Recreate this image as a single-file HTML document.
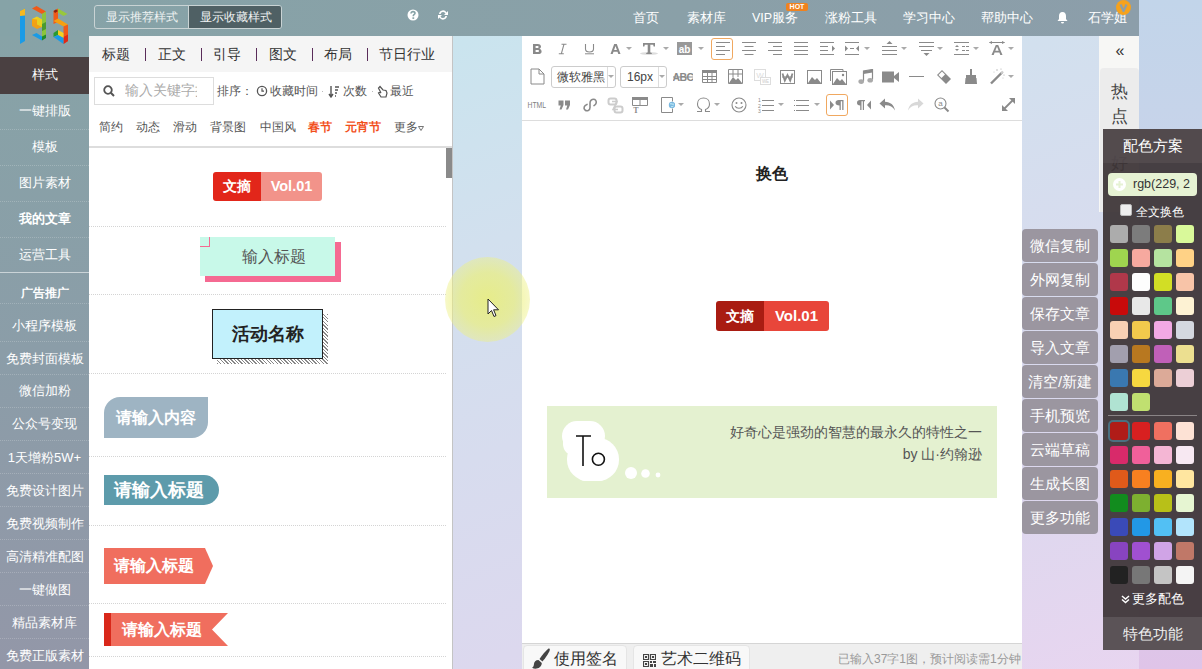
<!DOCTYPE html>
<html><head><meta charset="utf-8">
<style>
*{box-sizing:border-box;margin:0;padding:0}
html,body{width:1202px;height:669px;overflow:hidden}
body{position:relative;font-family:"Liberation Sans",sans-serif;background:linear-gradient(160deg,#c2e8ee 0%,#d2e0ee 38%,#dcd8ee 76%,#e9d5f0 100%);color:#333}
.abs{position:absolute}
#topbar{left:0;top:0;width:1139px;height:36px;background:linear-gradient(90deg,#86a3a7 0%,#8aa0a8 60%,#8c9eaa 100%)}
#side{left:0;top:36px;width:89px;height:633px;background:linear-gradient(180deg,#87a3a7 0%,#8b9da8 50%,#9397a8 100%)}
#panel{left:89px;top:36px;width:364px;height:633px;background:#fff;overflow:hidden}
#editor{left:522px;top:36px;width:500px;height:633px;background:#fff}
#cpanel{left:1103px;top:128px;width:99px;height:541px;background:#4b4446}
.btngrp{left:94px;top:5px;width:188px;height:24px;border:1px solid #c9d3d4;border-radius:3px;overflow:hidden;font-size:12px;color:#eef2f2}
.btngrp div{position:absolute;top:0;height:22px;line-height:22px;text-align:center}
.nav{top:0;height:36px;line-height:36px;font-size:12.5px;color:#fff;white-space:nowrap}
.si{position:absolute;left:0;width:89px;text-align:center;font-size:13px;color:#fff;white-space:nowrap}
.sep{position:absolute;left:0;width:89px;height:1px;background:repeating-linear-gradient(90deg,rgba(255,255,255,.2) 0 1px,transparent 1px 2px)}
.tabs span{display:inline-block}
.tabs .bar{color:#5a2d5a;margin:0 13px;font-size:13px}
.cats span{position:absolute;top:0}
.dot{position:absolute;left:0;width:357px;height:1px;background:repeating-linear-gradient(90deg,#d4d4d4 0 1px,transparent 1px 2px)}
.rb{left:1022px;width:76px;height:33px;line-height:33px;background:#9b96a0;border-radius:4px;color:#fff;font-size:15px;text-align:center;white-space:nowrap}
.sw{position:absolute;width:18px;height:18px;border-radius:3px}
.sel{border:1px solid #ccc;border-radius:3px;background:#fff;font-size:12px;color:#444}
.sel span{position:absolute;top:0;line-height:20px;white-space:nowrap}
.sel i{position:absolute;top:0;width:1px;height:20px;background:#ddd}
</style></head><body>
<div id="topbar" class="abs"></div>
<div id="side" class="abs"></div>
<!-- logo -->
<svg class="abs" style="left:14px;top:2px" width="60" height="46" viewBox="14 2 60 46">
 <polygon points="20,11 25,8.5 25,41 20,44" fill="#1a9be6"/>
 <polygon points="20,11 25,8.5 25,15.5 20,16" fill="#f5b820"/>
 <polygon points="32,8.5 36.5,6 46,11.5 42,14" fill="#f05a18"/>
 <polygon points="42,14 46,11.5 46,37 42,39.5" fill="#8cc43c"/>
 <polygon points="32,19 37,16.5 42,19.5 42,24 37,21.5 32,24" fill="#f0d020"/>
 <polygon points="32,19 32,26 37,29 42,27 42,20" fill="#f5a010" opacity="0.95"/>
 <polygon points="37,17 42,19.5 42,27 37,24.5" fill="#e8d020"/>
 <polygon points="42,24 46,22 46,29 42,31" fill="#4a9a30"/>
 <polygon points="32,35 36.5,33 42,36.5 42,40.5" fill="#1a9be6"/>
 <polygon points="42,36.5 46,34.5 46,38 42,40.5" fill="#1f8a2a"/>
 <polygon points="53.5,11 58,8.5 58,22 53.5,24" fill="#f05a18"/>
 <polygon points="53.5,11 56,9.5 58,11 55,13" fill="#8a2010"/>
 <polygon points="58,8.5 67.5,14 63.5,16 58,12.5" fill="#98c83c"/>
 <polygon points="53.5,21 58,18.5 68,24.5 63.5,26.5" fill="#f5a010"/>
 <polygon points="63.5,26.5 68,24.5 68,41 63.5,44" fill="#f05a18"/>
 <polygon points="63.5,37 68,34.5 68,41 63.5,44" fill="#e02818"/>
 <polygon points="58,30 63.5,33 63.5,38 58,35" fill="#f5d020"/>
 <polygon points="53.5,33 58,30 58,35 53.5,37" fill="#2a9a30"/>
 <polygon points="53.5,37 58,35 63.5,38 63.5,44" fill="#1a9be6"/>
</svg>
<div class="abs btngrp">
 <div style="left:0;width:93px">显示推荐样式</div>
 <div style="left:93px;width:94px;background:#4f6064;border-left:1px solid #c9d3d4">显示收藏样式</div>
</div>
<!-- help/refresh icons -->
<svg class="abs" style="left:407px;top:9px" width="12" height="12" viewBox="0 0 12 12"><circle cx="6" cy="6" r="5.5" fill="#fff"/><path d="M4 4.6 C4 3.2 5 2.6 6 2.6 C7.2 2.6 8 3.3 8 4.3 C8 5.3 7 5.6 6.6 6 C6.3 6.3 6.3 6.8 6.3 7.3" fill="none" stroke="#87a3a7" stroke-width="1.6"/><rect x="5.4" y="8.3" width="1.8" height="1.6" fill="#87a3a7"/></svg>
<svg class="abs" style="left:437px;top:9px" width="12" height="12" viewBox="0 0 12 12"><path d="M2 5 A4 4 0 0 1 9.5 3.5 L11 2 L11 6 L7 6 L8.5 4.5 A2.6 2.6 0 0 0 3.6 5 Z M10 7 A4 4 0 0 1 2.5 8.5 L1 10 L1 6 L5 6 L3.5 7.5 A2.6 2.6 0 0 0 8.4 7 Z" fill="#fff"/></svg>
<div class="abs nav" style="left:633px">首页</div>
<div class="abs nav" style="left:687px">素材库</div>
<div class="abs nav" style="left:752px">VIP服务</div>
<div class="abs" style="left:786px;top:3px;width:22px;height:8px;background:#f0821e;border-radius:2px;font-size:7px;line-height:8px;color:#fff;font-weight:bold;text-align:center">HOT</div>
<div class="abs nav" style="left:825px">涨粉工具</div>
<div class="abs nav" style="left:903px">学习中心</div>
<div class="abs nav" style="left:981px">帮助中心</div>
<svg class="abs" style="left:1056px;top:11px" width="13" height="13" viewBox="0 0 13 13"><path d="M6.5 1 C4 1 3 3 3 5 L3 8 L1.5 10 L11.5 10 L10 8 L10 5 C10 3 9 1 6.5 1 Z M5 11 A1.5 1.5 0 0 0 8 11 Z" fill="#fff"/></svg>
<div class="abs nav" style="left:1088px">石学姐</div>
<svg class="abs" style="left:1116px;top:0px" width="15" height="15" viewBox="0 0 15 15"><circle cx="7.5" cy="7.5" r="7.5" fill="#f6a21c"/><path d="M4.5 4.5 L7.5 11 L10.5 4.5" fill="none" stroke="#8e9ea6" stroke-width="2.2" stroke-linejoin="round"/></svg>

<!-- sidebar items -->
<div class="abs" style="left:0;top:57px;width:89px;height:37px;background:#4a4041"></div>
<div class="si" style="top:57px;line-height:36px">样式</div>
<div class="si" style="top:93px;line-height:36px">一键排版</div>
<div class="sep" style="top:129px"></div>
<div class="si" style="top:129px;line-height:36px">模板</div>
<div class="sep" style="top:165px"></div>
<div class="si" style="top:165px;line-height:36px">图片素材</div>
<div class="sep" style="top:201px"></div>
<div class="si" style="top:201px;line-height:36px;font-weight:bold">我的文章</div>
<div class="sep" style="top:237px"></div>
<div class="si" style="top:237px;line-height:36px">运营工具</div>
<div class="abs" style="left:0;top:272px;width:89px;height:1px;background:rgba(255,255,255,.55)"></div>
<div class="si" style="top:277px;line-height:33px;font-weight:bold;font-size:11.5px">广告推广</div>
<div class="sep" style="top:303px"></div>
<div class="si" style="top:309px;line-height:33px">小程序模板</div>
<div class="sep" style="top:341px"></div>
<div class="si" style="top:342px;line-height:33px">免费封面模板</div>
<div class="sep" style="top:374px"></div>
<div class="si" style="top:374px;line-height:33px">微信加粉</div>
<div class="sep" style="top:407px"></div>
<div class="si" style="top:407px;line-height:33px">公众号变现</div>
<div class="sep" style="top:440px"></div>
<div class="si" style="top:441px;line-height:33px">1天增粉5W+</div>
<div class="sep" style="top:473px"></div>
<div class="si" style="top:474px;line-height:33px">免费设计图片</div>
<div class="sep" style="top:506px"></div>
<div class="si" style="top:507px;line-height:33px">免费视频制作</div>
<div class="sep" style="top:539px"></div>
<div class="si" style="top:540px;line-height:33px">高清精准配图</div>
<div class="sep" style="top:572px"></div>
<div class="si" style="top:573px;line-height:33px">一键做图</div>
<div class="sep" style="top:605px"></div>
<div class="si" style="top:606px;line-height:33px">精品素材库</div>
<div class="sep" style="top:638px"></div>
<div class="si" style="top:639px;line-height:33px">免费正版素材</div>

<div id="panel" class="abs">
 <div class="abs" style="left:0;top:0;width:363px;height:36px;background:#f5f5f5"></div>
  <div class="abs" style="left:13px;top:0;height:36px;line-height:36px;font-size:14px;color:#333;white-space:nowrap">标题</div>
 <div class="abs" style="left:69px;top:0;height:36px;line-height:36px;font-size:14px;color:#333;white-space:nowrap">正文</div>
 <div class="abs" style="left:124px;top:0;height:36px;line-height:36px;font-size:14px;color:#333;white-space:nowrap">引导</div>
 <div class="abs" style="left:180px;top:0;height:36px;line-height:36px;font-size:14px;color:#333;white-space:nowrap">图文</div>
 <div class="abs" style="left:235px;top:0;height:36px;line-height:36px;font-size:14px;color:#333;white-space:nowrap">布局</div>
 <div class="abs" style="left:290px;top:0;height:36px;line-height:36px;font-size:14px;color:#333;white-space:nowrap">节日行业</div>
 <div class="abs" style="left:55.5px;top:12px;width:1px;height:13px;background:#5a2d5a"></div>
 <div class="abs" style="left:112px;top:12px;width:1px;height:13px;background:#5a2d5a"></div>
 <div class="abs" style="left:167px;top:12px;width:1px;height:13px;background:#5a2d5a"></div>
 <div class="abs" style="left:223px;top:12px;width:1px;height:13px;background:#5a2d5a"></div>
 <div class="abs" style="left:277.5px;top:12px;width:1px;height:13px;background:#5a2d5a"></div>

 <div class="abs" style="left:5px;top:41px;width:120px;height:28px;border:1px solid #ddd;background:#fff"></div>
 <svg class="abs" style="left:14px;top:49px" width="12" height="12" viewBox="0 0 12 12"><circle cx="5" cy="5" r="3.8" fill="none" stroke="#555" stroke-width="1.8"/><line x1="7.8" y1="7.8" x2="11" y2="11" stroke="#555" stroke-width="2"/></svg>
 <div class="abs" style="left:36px;top:41px;width:72px;height:28px;line-height:28px;font-size:13.5px;color:#aaa;white-space:nowrap;overflow:hidden">输入关键字搜索</div>
 <div class="abs" style="left:128px;top:46px;height:18px;line-height:18px;font-size:12px;color:#555;white-space:nowrap">排序：</div>
 <svg class="abs" style="left:167px;top:49px" width="12" height="12" viewBox="0 0 12 12"><circle cx="6" cy="6" r="4.6" fill="none" stroke="#555" stroke-width="1.3"/><path d="M6 3.2 V6.2 H8" fill="none" stroke="#555" stroke-width="1.2"/></svg>
 <div class="abs" style="left:181px;top:46px;height:18px;line-height:18px;font-size:12px;color:#555;white-space:nowrap">收藏时间</div>
 <div class="abs" style="left:233px;top:55px;width:1px;height:1px;background:#bbb"></div>
 <svg class="abs" style="left:239px;top:49px" width="12" height="13" viewBox="0 0 12 13"><path d="M3 1 V11 M1 9 L3 12 L5 9" fill="none" stroke="#555" stroke-width="1.4"/><path d="M7 2 H11 M7 5 H10 M7 8 H9 M7 11 H8" stroke="#555" stroke-width="1.3"/></svg>
 <div class="abs" style="left:254px;top:46px;height:18px;line-height:18px;font-size:12px;color:#555;white-space:nowrap">次数</div>
 <div class="abs" style="left:283px;top:55px;width:1px;height:1px;background:#bbb"></div>
 <svg class="abs" style="left:288px;top:49px" width="11" height="13" viewBox="0 0 11 13"><path d="M3 1.5 L6 5 L9 5.5 L10 8 L9 12 L4 12 L1.5 8 L3 7 L4 8 L1.5 3 Z" fill="none" stroke="#555" stroke-width="1.2"/></svg>
 <div class="abs" style="left:301px;top:46px;height:18px;line-height:18px;font-size:12px;color:#555;white-space:nowrap">最近</div>
 <div class="abs cats" style="left:10px;top:82px;height:18px;line-height:18px;font-size:12px;color:#555;white-space:nowrap">
  <span style="left:0">简约</span><span style="left:37px">动态</span><span style="left:74px">滑动</span><span style="left:111px">背景图</span><span style="left:161px">中国风</span><span style="left:209px;color:#f2501c;font-weight:bold">春节</span><span style="left:246px;color:#f2501c;font-weight:bold">元宵节</span><span style="left:295px">更多<svg width="6" height="5" viewBox="0 0 6 5" style="vertical-align:0px;margin-left:0px"><polygon points="0.5,0.5 5.5,0.5 3,4.5" fill="none" stroke="#666" stroke-width="0.9"/></svg></span>
 </div>>
 <div class="abs" style="left:0;top:110px;width:363px;height:2px;background:#ddd"></div>
 <div class="abs" style="left:357px;top:112px;width:6px;height:30px;background:#8a8a8a"></div>
 <div class="abs" style="left:363px;top:0;width:1px;height:633px;background:#c4c4c4"></div>
 <div class="dot" style="top:190px"></div>
 <div class="dot" style="top:258px"></div>
 <div class="dot" style="top:337px"></div>
 <div class="dot" style="top:420px"></div>
 <div class="dot" style="top:489px"></div>
 <div class="dot" style="top:567px"></div>
 <div class="dot" style="top:620px"></div>
 <!-- item1 -->
 <div class="abs" style="left:124px;top:136px;width:109px;height:29px;border-radius:3px;overflow:hidden;font-weight:bold;color:#fff;white-space:nowrap">
  <div class="abs" style="left:0;top:0;width:48px;height:29px;background:#e2261a;line-height:29px;text-align:center;font-size:14px">文摘</div>
  <div class="abs" style="left:48px;top:0;width:61px;height:29px;background:#f2938a;line-height:29px;text-align:center;font-size:14.5px">Vol.01</div>
 </div>
 <!-- item2 -->
 <div class="abs" style="left:116px;top:206px;width:136px;height:40px;background:#f56a92"></div>
 <div class="abs" style="left:111px;top:201px;width:135px;height:39px;background:#c8f9e9;line-height:39px;text-align:center;padding-left:12px;font-size:16px;color:#555">输入标题</div>
 <div class="abs" style="left:111px;top:201px;width:10px;height:10px;border-right:1px solid #f56a92;border-bottom:1px solid #f56a92"></div>
 <!-- item3 -->
 <div class="abs" style="left:128px;top:278px;width:111px;height:50px;background:repeating-linear-gradient(45deg,#888 0 1px,#fff 1px 2.5px)"></div>
 <div class="abs" style="left:123px;top:273px;width:111px;height:50px;background:#c2f1fc;border:1px solid #222;line-height:48px;text-align:center;font-size:18px;font-weight:bold;color:#222">活动名称</div>
 <!-- item4 -->
 <div class="abs" style="left:15px;top:361px;width:104px;height:41px;background:#9eb4c3;border-radius:16px 0 16px 0;line-height:41px;text-align:center;font-size:16px;font-weight:bold;color:#fff;white-space:nowrap">请输入内容</div>
 <!-- item5 -->
 <div class="abs" style="left:15px;top:439px;width:115px;height:30px;background:#5d9bab;border-radius:0 15px 15px 0;line-height:30px;padding-left:10px;font-size:18px;font-weight:bold;color:#fff;white-space:nowrap">请输入标题</div>
 <!-- item6 -->
 <svg class="abs" style="left:15px;top:512px" width="110" height="36" viewBox="0 0 110 36"><polygon points="0,0 101,0 109,18 101,36 0,36" fill="#f06e5e"/></svg>
 <div class="abs" style="left:25px;top:512px;height:36px;line-height:36px;font-size:16px;font-weight:bold;color:#fff;white-space:nowrap">请输入标题</div>
 <!-- item7 -->
 <svg class="abs" style="left:15px;top:577px" width="125" height="33" viewBox="0 0 125 33"><polygon points="0,0 124,0 108,16.5 124,33 0,33" fill="#f06e5e"/><rect x="0" y="0" width="7" height="33" fill="#d9281a"/></svg>
 <div class="abs" style="left:33px;top:577px;height:33px;line-height:33px;font-size:16px;font-weight:bold;color:#fff;white-space:nowrap">请输入标题</div>
</div>
<div id="editor" class="abs"></div>
<div class="abs" style="left:522px;top:120px;width:500px;height:1px;background:#ddd"></div>
<svg class="abs" style="left:532px;top:43px" width="10" height="12" viewBox="0 0 10 12"><path d="M1 1 H5.5 C8 1 9 2.3 9 3.6 C9 4.8 8.2 5.5 7.3 5.8 C8.6 6.1 9.6 7 9.6 8.4 C9.6 10.2 8.2 11 6 11 H1 Z M3.6 3 V5 H5.4 C6.2 5 6.6 4.6 6.6 4 C6.6 3.4 6.2 3 5.4 3 Z M3.6 6.9 V9 H5.6 C6.5 9 7 8.6 7 7.95 C7 7.3 6.5 6.9 5.6 6.9 Z" fill="#8a8a8a"/></svg>
<svg class="abs" style="left:558px;top:43px" width="9" height="12" viewBox="0 0 9 12"><path d="M3.5 1.2 H8.5 M0.8 10.8 H5.8 M6 1.2 L3.3 10.8" stroke="#8a8a8a" stroke-width="1.1" fill="none"/></svg>
<svg class="abs" style="left:584px;top:43px" width="11" height="12" viewBox="0 0 11 12"><path d="M1.5 1 V6 C1.5 8.2 3 9 5.5 9 C8 9 9.5 8.2 9.5 6 V1" stroke="#8a8a8a" stroke-width="1.1" fill="none"/><rect x="1" y="10.3" width="9" height="1" fill="#8a8a8a"/></svg>
<svg class="abs" style="left:610px;top:43px" width="11" height="12" viewBox="0 0 11 12"><path d="M0.5 11 L4.2 1 H6.8 L10.5 11 H8.3 L7.5 8.8 H3.5 L2.7 11 Z M4.1 7 H6.9 L5.5 3 Z" fill="#8a8a8a"/></svg>
<svg class="abs" style="left:626px;top:47px" width="6" height="4" viewBox="0 0 6 4"><polygon points="0,0 6,0 3,3" fill="#aaa"/></svg>
<svg class="abs" style="left:640px;top:42px" width="19" height="14" viewBox="0 0 19 14"><ellipse cx="9" cy="11.5" rx="9" ry="1.5" fill="#ddd"/><path d="M3 1 H15 V4.5 H13.6 L13.2 2.8 H10.3 V10.5 L11.8 11 V12 H6.2 V11 L7.7 10.5 V2.8 H4.8 L4.4 4.5 H3 Z" fill="#8a8a8a"/></svg>
<svg class="abs" style="left:663px;top:47px" width="6" height="4" viewBox="0 0 6 4"><polygon points="0,0 6,0 3,3" fill="#aaa"/></svg>
<svg class="abs" style="left:677px;top:42px" width="15" height="13" viewBox="0 0 15 13"><rect x="0" y="0" width="15" height="13" fill="#999"/><text x="7.5" y="10.5" font-family="Liberation Sans" font-weight="bold" font-size="10" fill="#fff" text-anchor="middle">ab</text></svg>
<svg class="abs" style="left:698px;top:47px" width="6" height="4" viewBox="0 0 6 4"><polygon points="0,0 6,0 3,3" fill="#aaa"/></svg>
<div class="abs" style="left:711px;top:38px;width:22px;height:22px;border:1px solid #f0a860;border-radius:3px"></div>
<svg class="abs" style="left:716px;top:42px" width="15" height="14" viewBox="0 0 15 14"><rect x="0" y="0" width="14" height="1" fill="#8a8a8a"/><rect x="0" y="4" width="9" height="1" fill="#8a8a8a"/><rect x="0" y="8" width="14" height="1" fill="#8a8a8a"/><rect x="0" y="12" width="9" height="1" fill="#8a8a8a"/></svg>
<svg class="abs" style="left:742px;top:42px" width="15" height="14" viewBox="0 0 15 14"><rect x="0" y="0" width="14" height="1" fill="#8a8a8a"/><rect x="2.5" y="4" width="9" height="1" fill="#8a8a8a"/><rect x="0" y="8" width="14" height="1" fill="#8a8a8a"/><rect x="2.5" y="12" width="9" height="1" fill="#8a8a8a"/></svg>
<svg class="abs" style="left:768px;top:42px" width="15" height="14" viewBox="0 0 15 14"><rect x="0" y="0" width="14" height="1" fill="#8a8a8a"/><rect x="5" y="4" width="9" height="1" fill="#8a8a8a"/><rect x="0" y="8" width="14" height="1" fill="#8a8a8a"/><rect x="5" y="12" width="9" height="1" fill="#8a8a8a"/></svg>
<svg class="abs" style="left:794px;top:42px" width="15" height="14" viewBox="0 0 15 14"><rect x="0" y="0" width="14" height="1" fill="#8a8a8a"/><rect x="0" y="4" width="14" height="1" fill="#8a8a8a"/><rect x="0" y="8" width="14" height="1" fill="#8a8a8a"/><rect x="0" y="12" width="14" height="1" fill="#8a8a8a"/></svg>
<svg class="abs" style="left:820px;top:42px" width="16" height="14" viewBox="0 0 16 14"><rect x="0" y="0" width="14" height="1" fill="#8a8a8a"/><rect x="0" y="4" width="8" height="1" fill="#8a8a8a"/><rect x="0" y="8" width="8" height="1" fill="#8a8a8a"/><rect x="0" y="12" width="14" height="1" fill="#8a8a8a"/><polygon points="12,3.5 15,6.5 12,9.5" fill="#8a8a8a"/></svg>
<svg class="abs" style="left:845px;top:42px" width="15" height="14" viewBox="0 0 15 14"><rect x="0" y="0" width="14" height="1" fill="#8a8a8a"/><rect x="5" y="6" width="4" height="1" fill="#8a8a8a"/><rect x="0" y="12" width="14" height="1" fill="#8a8a8a"/><polygon points="0,3.5 3,6.5 0,9.5" fill="#8a8a8a"/><polygon points="14,3.5 11,6.5 14,9.5" fill="#8a8a8a"/></svg>
<svg class="abs" style="left:864px;top:47px" width="6" height="4" viewBox="0 0 6 4"><polygon points="0,0 6,0 3,3" fill="#aaa"/></svg>
<svg class="abs" style="left:882px;top:40px" width="15" height="16" viewBox="0 0 15 16"><polygon points="4.5,4 7.5,1 10.5,4" fill="#8a8a8a"/><rect x="0" y="6" width="15" height="1" fill="#8a8a8a"/><rect x="0" y="10" width="15" height="1" fill="#8a8a8a"/><rect x="0" y="14" width="15" height="1" fill="#8a8a8a"/></svg>
<svg class="abs" style="left:901px;top:47px" width="6" height="4" viewBox="0 0 6 4"><polygon points="0,0 6,0 3,3" fill="#aaa"/></svg>
<svg class="abs" style="left:919px;top:41px" width="15" height="16" viewBox="0 0 15 16"><rect x="0" y="1" width="15" height="1" fill="#8a8a8a"/><rect x="0" y="5" width="15" height="1" fill="#8a8a8a"/><rect x="2" y="9" width="11" height="1" fill="#8a8a8a"/><polygon points="4.5,12 10.5,12 7.5,15" fill="#8a8a8a"/></svg>
<svg class="abs" style="left:937px;top:47px" width="6" height="4" viewBox="0 0 6 4"><polygon points="0,0 6,0 3,3" fill="#aaa"/></svg>
<svg class="abs" style="left:954px;top:41px" width="15" height="15" viewBox="0 0 15 15"><rect x="0" y="1" width="15" height="1" fill="#8a8a8a"/><rect x="0" y="13" width="15" height="1" fill="#8a8a8a"/><polygon points="1,6 3,4 5,6" fill="#8a8a8a"/><polygon points="1,8 3,10 5,8" fill="#8a8a8a"/><rect x="8" y="5" width="3" height="1" fill="#8a8a8a"/><rect x="12" y="5" width="3" height="1" fill="#8a8a8a"/><rect x="8" y="9" width="3" height="1" fill="#8a8a8a"/><rect x="12" y="9" width="3" height="1" fill="#8a8a8a"/></svg>
<svg class="abs" style="left:973px;top:47px" width="6" height="4" viewBox="0 0 6 4"><polygon points="0,0 6,0 3,3" fill="#aaa"/></svg>
<svg class="abs" style="left:989px;top:41px" width="16" height="15" viewBox="0 0 16 15"><rect x="0.5" y="1" width="15" height="1" fill="#8a8a8a"/><polygon points="0,1.5 3,0 3,3" fill="#8a8a8a"/><polygon points="16,1.5 13,0 13,3" fill="#8a8a8a"/><path d="M2.5 14 L6.8 4 H9.2 L13.5 14 H11.3 L10.4 11.6 H5.6 L4.7 14 Z M6.3 9.8 H9.7 L8 5.6 Z" fill="#8a8a8a"/></svg>
<svg class="abs" style="left:1008px;top:47px" width="6" height="4" viewBox="0 0 6 4"><polygon points="0,0 6,0 3,3" fill="#aaa"/></svg>
<svg class="abs" style="left:530px;top:68px" width="15" height="17" viewBox="0 0 15 17"><path d="M1 1 H9 L14 6 V16 H1 Z M9 1 V6 H14" fill="none" stroke="#8a8a8a" stroke-width="1"/></svg>
<div class="abs sel" style="left:551px;top:66px;width:65px;height:22px"><span style="left:5px">微软雅黑</span><i style="left:55px"></i></div>
<svg class="abs" style="left:608px;top:75px" width="6" height="4" viewBox="0 0 6 4"><polygon points="0,0 6,0 3,3" fill="#aaa"/></svg>
<div class="abs sel" style="left:620px;top:66px;width:47px;height:22px"><span style="left:6px">16px</span><i style="left:37px"></i></div>
<svg class="abs" style="left:659px;top:75px" width="6" height="4" viewBox="0 0 6 4"><polygon points="0,0 6,0 3,3" fill="#aaa"/></svg>
<svg class="abs" style="left:673px;top:70px" width="20" height="14" viewBox="0 0 20 14"><text x="10" y="11" font-family="Liberation Sans" font-weight="bold" font-size="10.5" fill="#8a8a8a" text-anchor="middle" letter-spacing="-0.5">ABC</text><rect x="0" y="6.5" width="20" height="1" fill="#8a8a8a"/></svg>
<svg class="abs" style="left:702px;top:70px" width="15" height="13" viewBox="0 0 15 13"><rect x="0" y="0" width="15" height="3" fill="#8a8a8a"/><path d="M0.5 0.5 V12.5 H14.5 V0.5 M0.5 6.5 H14.5 M0.5 9.5 H14.5 M5.5 3 V12.5 M10 3 V12.5" fill="none" stroke="#8a8a8a" stroke-width="1"/></svg>
<svg class="abs" style="left:728px;top:69px" width="15" height="15" viewBox="0 0 15 15"><path d="M0.5 0.5 H14.5 V14.5 H0.5 Z M0.5 5 H14.5 M5 0.5 V8 M10 0.5 V8" fill="none" stroke="#8a8a8a" stroke-width="1"/><polygon points="1,14 5,8 8,11 10,9 14,14" fill="#8a8a8a"/></svg>
<svg class="abs" style="left:754px;top:69px" width="17" height="16" viewBox="0 0 17 16"><rect x="0.5" y="0.5" width="11" height="11" fill="none" stroke="#ddd"/><text x="6" y="9" font-family="Liberation Sans" font-size="8" fill="#ddd" text-anchor="middle">W</text><rect x="6.5" y="8.5" width="10" height="7" fill="#fff" stroke="#ddd"/><text x="11.5" y="14" font-family="Liberation Sans" font-size="4.5" fill="#ccc" text-anchor="middle">WE</text></svg>
<svg class="abs" style="left:780px;top:70px" width="15" height="14" viewBox="0 0 15 14"><rect x="0.5" y="0.5" width="14" height="13" fill="none" stroke="#8a8a8a"/><path d="M2.5 3.5 L4.8 10.5 L7.5 5 L10.2 10.5 L12.5 3.5" fill="none" stroke="#8a8a8a" stroke-width="1.8"/><rect x="2" y="6.5" width="11" height="1" fill="#8a8a8a"/></svg>
<svg class="abs" style="left:807px;top:70px" width="15" height="14" viewBox="0 0 15 14"><rect x="0.5" y="0.5" width="14" height="13" fill="none" stroke="#8a8a8a"/><polygon points="1,13 5,7 8,10 10,8 14,13" fill="#8a8a8a"/></svg>
<svg class="abs" style="left:830px;top:69px" width="17" height="16" viewBox="0 0 17 16"><path d="M0.5 12 V0.5 H13 V2" fill="none" stroke="#8a8a8a"/><rect x="2.5" y="2.5" width="14" height="13" fill="#fff" stroke="#8a8a8a"/><polygon points="3,15 7,9 10,12 12,10 16,15" fill="#8a8a8a"/><circle cx="13" cy="6" r="1.2" fill="#8a8a8a"/></svg>
<svg class="abs" style="left:858px;top:69px" width="16" height="16" viewBox="0 0 16 16"><path d="M5.5 12 V2 L14.5 0.5 V10.5" fill="none" stroke="#8a8a8a" stroke-width="1.2"/><path d="M5.5 2 L14.5 0.5 V3.5 L5.5 5 Z" fill="#8a8a8a"/><ellipse cx="3.2" cy="12.6" rx="2.8" ry="2.3" fill="#aaa"/><ellipse cx="12.2" cy="11.2" rx="2.8" ry="2.3" fill="#aaa"/></svg>
<svg class="abs" style="left:882px;top:71px" width="18" height="12" viewBox="0 0 18 12"><rect x="0" y="0.5" width="12" height="11" fill="#8a8a8a"/><polygon points="12,5 17,1 17,11 12,7" fill="#8a8a8a"/></svg>
<svg class="abs" style="left:909px;top:76px" width="16" height="2" viewBox="0 0 16 2"><rect x="0" y="0" width="15" height="1" fill="#8a8a8a"/></svg>
<svg class="abs" style="left:936px;top:69px" width="16" height="16" viewBox="0 0 16 16"><path d="M1 6 L6 1 L15 10 L10 15 Z" fill="#8a8a8a"/><path d="M2.5 6 L6 2.5 L9 5.5 L5.5 9 Z" fill="#fff"/></svg>
<svg class="abs" style="left:964px;top:69px" width="14" height="16" viewBox="0 0 14 16"><rect x="6" y="0" width="2" height="6" fill="#8a8a8a"/><rect x="2" y="6" width="10" height="3" fill="#8a8a8a"/><path d="M1.5 9 H12.5 L13 15 H1 Z" fill="#8a8a8a"/></svg>
<svg class="abs" style="left:989px;top:68px" width="16" height="17" viewBox="0 0 16 17"><path d="M2 15.5 L13 4.5" stroke="#8a8a8a" stroke-width="2.4"/><path d="M12 5.5 L14 3.5" stroke="#ccc" stroke-width="2.4"/><circle cx="8" cy="2" r="0.7" fill="#aaa"/><circle cx="12" cy="1" r="0.6" fill="#aaa"/><circle cx="15" cy="7" r="0.6" fill="#aaa"/><circle cx="5" cy="4" r="0.5" fill="#bbb"/><circle cx="14" cy="10" r="0.5" fill="#bbb"/></svg>
<svg class="abs" style="left:1008px;top:75px" width="6" height="4" viewBox="0 0 6 4"><polygon points="0,0 6,0 3,3" fill="#aaa"/></svg>
<svg class="abs" style="left:527px;top:100px" width="20" height="9" viewBox="0 0 20 9"><text x="0.5" y="7.8" font-family="Liberation Sans" font-size="8.2" fill="#808080" textLength="18.5" lengthAdjust="spacingAndGlyphs">HTML</text></svg>
<svg class="abs" style="left:558px;top:100px" width="13" height="10" viewBox="0 0 13 10"><path d="M0.5 0.5 H5.5 V5 L3.5 9.5 H1.5 L2.8 5.5 H0.5 Z M7 0.5 H12 V5 L10 9.5 H8 L9.3 5.5 H7 Z" fill="#8a8a8a"/></svg>
<svg class="abs" style="left:582px;top:97px" width="16" height="16" viewBox="0 0 16 16"><path d="M5 7.4 C2 8.5 1.2 11.5 3 13 C5 14.5 8 13.5 8 10.5 V6 C8 3.5 10 2.3 11.5 2.3 C13.5 2.3 14.5 4 14.2 5.8 C14 7 13 8 12 8.6" fill="none" stroke="#8a8a8a" stroke-width="1.6" stroke-linecap="round"/></svg>
<svg class="abs" style="left:607px;top:97px" width="17" height="17" viewBox="0 0 17 17"><rect x="1.5" y="1.5" width="8" height="6" rx="2" fill="none" stroke="#ccc" stroke-width="2"/><rect x="7.5" y="9.5" width="8" height="6" rx="2" fill="none" stroke="#ccc" stroke-width="2"/><path d="M5 4.5 H10 L6 12.5 H11" fill="none" stroke="#ccc" stroke-width="1.5"/></svg>
<svg class="abs" style="left:632px;top:97px" width="16" height="16" viewBox="0 0 16 16"><rect x="0" y="0" width="16" height="3" fill="#8a8a8a"/><path d="M0.5 3 V8.5 H15.5 V3 M8 3 V8.5" fill="none" stroke="#8a8a8a"/><text x="4" y="15.5" font-family="Liberation Serif" font-weight="bold" font-size="8" fill="#8a8a8a" text-anchor="middle">T</text></svg>
<svg class="abs" style="left:661px;top:97px" width="14" height="16" viewBox="0 0 14 16"><path d="M11.5 4.5 V0.5 H0.5 V15.5 H11.5 V11.5" fill="none" stroke="#8a8a8a"/><circle cx="11" cy="8" r="3.2" fill="#7ab8e0"/><path d="M9 7 C10 6 12 8 13 7 M10 10 C11 9 12 10 12.5 9" stroke="#dff" stroke-width="0.8" fill="none"/></svg>
<svg class="abs" style="left:678px;top:103px" width="6" height="4" viewBox="0 0 6 4"><polygon points="0,0 6,0 3,3" fill="#aaa"/></svg>
<svg class="abs" style="left:696px;top:97px" width="15" height="15" viewBox="0 0 15 15"><path d="M1 14.5 H5.5 V12.5 C2.8 11.5 1.5 9.5 1.5 7 C1.5 3.5 4 1 7.5 1 C11 1 13.5 3.5 13.5 7 C13.5 9.5 12.2 11.5 9.5 12.5 V14.5 H14" fill="none" stroke="#8a8a8a" stroke-width="1.1"/></svg>
<svg class="abs" style="left:714px;top:103px" width="6" height="4" viewBox="0 0 6 4"><polygon points="0,0 6,0 3,3" fill="#aaa"/></svg>
<svg class="abs" style="left:731px;top:97px" width="16" height="16" viewBox="0 0 16 16"><circle cx="8" cy="8" r="7" fill="none" stroke="#8a8a8a" stroke-width="1.1"/><circle cx="5.5" cy="6" r="1" fill="#8a8a8a"/><circle cx="10.5" cy="6" r="1" fill="#8a8a8a"/><path d="M4.2 9.2 C5.5 12 10.5 12 11.8 9.2" fill="none" stroke="#8a8a8a" stroke-width="1.1"/></svg>
<svg class="abs" style="left:757px;top:97px" width="18" height="16" viewBox="0 0 18 16"><text x="1" y="5" font-family="Liberation Sans" font-size="5" fill="#8a8a8a">1</text><text x="1" y="10.5" font-family="Liberation Sans" font-size="5" fill="#8a8a8a">2</text><text x="1" y="16" font-family="Liberation Sans" font-size="5" fill="#8a8a8a">3</text><rect x="5" y="3" width="12" height="1" fill="#8a8a8a"/><rect x="5" y="8" width="12" height="1" fill="#8a8a8a"/><rect x="5" y="13" width="12" height="1" fill="#8a8a8a"/></svg>
<svg class="abs" style="left:778px;top:103px" width="6" height="4" viewBox="0 0 6 4"><polygon points="0,0 6,0 3,3" fill="#aaa"/></svg>
<svg class="abs" style="left:794px;top:99px" width="15" height="12" viewBox="0 0 15 12"><rect x="0" y="1" width="1" height="1" fill="#8a8a8a"/><rect x="0" y="6" width="1" height="1" fill="#8a8a8a"/><rect x="0" y="11" width="1" height="1" fill="#8a8a8a"/><rect x="2" y="1" width="13" height="1" fill="#8a8a8a"/><rect x="2" y="6" width="13" height="1" fill="#8a8a8a"/><rect x="2" y="11" width="13" height="1" fill="#8a8a8a"/></svg>
<svg class="abs" style="left:814px;top:103px" width="6" height="4" viewBox="0 0 6 4"><polygon points="0,0 6,0 3,3" fill="#aaa"/></svg>
<div class="abs" style="left:826px;top:94px;width:22px;height:22px;border:1px solid #f0a860;border-radius:3px"></div>
<svg class="abs" style="left:830px;top:99px" width="14" height="12" viewBox="0 0 14 12"><polygon points="0,1.5 4,6 0,10.5" fill="#8a8a8a"/><path d="M8.5 1 H13.5 V11 H12.2 V2.3 H10.8 V11 H9.5 V6.5 C7 6.5 5.5 5.5 5.5 3.8 C5.5 2 7 1 8.5 1 Z" fill="#8a8a8a"/></svg>
<svg class="abs" style="left:857px;top:99px" width="14" height="12" viewBox="0 0 14 12"><path d="M3 1 H8 V2.3 H7 V11 H5.8 V2.3 H4.5 V11 H3.2 V6.5 C1 6.5 0 5.5 0 3.8 C0 2 1.2 1 3 1 Z" fill="#8a8a8a"/><polygon points="14,1.5 10,6 14,10.5" fill="#8a8a8a"/></svg>
<svg class="abs" style="left:879px;top:98px" width="17" height="14" viewBox="0 0 17 14"><path d="M6 0.5 L0.5 5.5 L6 10.5 V7.3 C10.5 7 13.5 8.5 16 12.5 C15 7 11.5 4 6 3.8 Z" fill="#8a8a8a"/></svg>
<svg class="abs" style="left:907px;top:98px" width="17" height="14" viewBox="0 0 17 14"><path d="M11 0.5 L16.5 5.5 L11 10.5 V7.3 C6.5 7 3.5 8.5 1 12.5 C2 7 5.5 4 11 3.8 Z" fill="#d8d8d8"/></svg>
<svg class="abs" style="left:934px;top:97px" width="16" height="16" viewBox="0 0 16 16"><circle cx="6.5" cy="6.5" r="5.5" fill="none" stroke="#8a8a8a" stroke-width="1.1"/><text x="6.5" y="9.3" font-family="Liberation Sans" font-size="8" fill="#8a8a8a" text-anchor="middle">a</text><path d="M10.5 10.5 L14.5 14.5" stroke="#8a8a8a" stroke-width="2"/></svg>
<svg class="abs" style="left:1002px;top:98px" width="13" height="13" viewBox="0 0 13 13"><path d="M1 12 L12 1" stroke="#8a8a8a" stroke-width="1.8"/><polygon points="0,13 0,7 6,13" fill="#8a8a8a"/><polygon points="13,0 7,0 13,6" fill="#8a8a8a"/></svg>
<!-- content -->
<div class="abs" style="left:722px;top:162px;width:100px;height:24px;line-height:24px;text-align:center;font-size:16px;font-weight:bold;color:#222">换色</div>
<div class="abs" style="left:716px;top:301px;width:113px;height:30px;border-radius:3px;overflow:hidden;color:#fff;font-weight:bold;white-space:nowrap">
 <div class="abs" style="left:0;top:0;width:48px;height:30px;background:#a91c12;line-height:30px;text-align:center;font-size:14px">文摘</div>
 <div class="abs" style="left:48px;top:0;width:65px;height:30px;background:#e8463a;line-height:30px;text-align:center;font-size:15px">Vol.01</div>
</div>
<div class="abs" style="left:547px;top:406px;width:450px;height:92px;background:#e4f1d0"></div>
<svg class="abs" style="left:547px;top:406px" width="120" height="92" viewBox="0 0 120 92">
 <rect x="15" y="15" width="43" height="30" rx="15" fill="#fff"/>
 <rect x="20" y="32" width="52" height="43" rx="21" fill="#fff"/>
 <rect x="16" y="24" width="30" height="26" rx="12" fill="#fff"/>
 <rect x="30" y="58" width="30" height="17" rx="8" fill="#fff"/>
 <circle cx="84" cy="67" r="6" fill="#fff"/><circle cx="98.5" cy="67.5" r="4.3" fill="#fff"/><circle cx="111" cy="69" r="2.4" fill="#fff"/>
 <path d="M29 30 H44 M36 30 V60" stroke="#111" stroke-width="1.6" fill="none"/>
 <circle cx="51.4" cy="53.2" r="6" stroke="#111" stroke-width="1.6" fill="none"/>
</svg>
<div class="abs" style="left:647px;top:422px;width:335px;height:20px;line-height:20px;text-align:right;font-size:14px;color:#555;white-space:nowrap">好奇心是强劲的智慧的最永久的特性之一</div>
<div class="abs" style="left:647px;top:444px;width:335px;height:20px;line-height:20px;text-align:right;font-size:14px;color:#555;white-space:nowrap">by 山·约翰逊</div>
<!-- bottom bar -->
<div class="abs" style="left:522px;top:643px;width:500px;height:26px;background:#efefef;border-top:1px solid #d5d5d5;overflow:hidden">
 <div class="abs" style="left:1px;top:1px;width:104px;height:30px;background:#f8f8f8;border:1px solid #e5e5e5;border-radius:4px"></div>
 <div class="abs" style="left:111px;top:1px;width:117px;height:30px;background:#f8f8f8;border:1px solid #e5e5e5;border-radius:4px"></div>
 <svg class="abs" style="left:10px;top:4px" width="18" height="22" viewBox="0 0 18 22"><path d="M16.5 0.5 C14 2.5 10 7 7.5 11 L10.5 13.5 C13.5 10 17 5 17.8 2 C18 1 17.5 0.3 16.5 0.5 Z" fill="#444"/><path d="M6.5 12 C3.5 12 2.2 14 2 16 C1.8 18 1.2 19.2 0 19.8 C3 21.5 9.5 21 9.8 15 Z" fill="#444"/></svg>
 <div class="abs" style="left:32px;top:4px;line-height:22px;font-size:16px;color:#333;white-space:nowrap">使用签名</div>
 <svg class="abs" style="left:121px;top:10px" width="13" height="13" viewBox="0 0 13 13"><path d="M0.5 0.5 H5.5 V5.5 H0.5 Z M7.5 0.5 H12.5 V5.5 H7.5 Z M0.5 7.5 H5.5 V12.5 H0.5 Z" fill="none" stroke="#444" stroke-width="1.2"/><rect x="2" y="2" width="2" height="2" fill="#444"/><rect x="9" y="2" width="2" height="2" fill="#444"/><rect x="2" y="9" width="2" height="2" fill="#444"/><rect x="7" y="7" width="2" height="2" fill="#444"/><rect x="10" y="7" width="3" height="2" fill="#444"/><rect x="7" y="10" width="3" height="3" fill="#444"/><rect x="11" y="10" width="2" height="3" fill="#444"/></svg>
 <div class="abs" style="left:139px;top:4px;line-height:22px;font-size:16px;color:#333;white-space:nowrap">艺术二维码</div>
 <div class="abs" style="left:316px;top:5px;line-height:20px;font-size:12px;color:#999;white-space:nowrap">已输入37字1图，预计阅读需1分钟</div>
</div>
<!-- cursor highlight -->
<div class="abs" style="left:445px;top:257px;width:85px;height:85px;border-radius:50%;background:radial-gradient(circle,rgba(236,240,110,.78) 0%,rgba(236,240,120,.68) 45%,rgba(238,240,140,.38) 78%,rgba(240,240,160,0) 100%)"></div>
<svg class="abs" style="left:487px;top:298px" width="12" height="20" viewBox="0 0 12 20"><path d="M1 1 V16 L4.5 12.5 L7 18.5 L9 17.6 L6.6 11.8 H11.5 Z" fill="#fff" stroke="#222" stroke-width="1"/></svg>
<!-- right buttons -->
<div class="abs rb" style="top:229px">微信复制</div>
<div class="abs rb" style="top:263px">外网复制</div>
<div class="abs rb" style="top:297px">保存文章</div>
<div class="abs rb" style="top:331px">导入文章</div>
<div class="abs rb" style="top:365px">清空/新建</div>
<div class="abs rb" style="top:399px">手机预览</div>
<div class="abs rb" style="top:433px">云端草稿</div>
<div class="abs rb" style="top:467px">生成长图</div>
<div class="abs rb" style="top:501px">更多功能</div>

<!-- hot column -->
<div class="abs" style="left:1139px;top:0;width:63px;height:669px;background:linear-gradient(180deg,#c2d5ea 0%,#cdd2ea 45%,#dfc4e8 100%)"></div>
<div class="abs" style="left:1099px;top:36px;width:40px;height:176px;background:#f7f7f5"></div>
<div class="abs" style="left:1112px;top:40px;width:16px;height:22px;line-height:22px;font-size:16px;color:#333;text-align:center">«</div>
<div class="abs" style="left:1100px;top:68px;width:39px;height:144px;background:#ececec;border-radius:4px 4px 0 0"></div>
<div class="abs" style="left:1100px;top:79px;width:39px;font-size:17px;line-height:25px;color:#444;text-align:center">热<br>点</div>
<div class="abs" style="left:1100px;top:151px;width:39px;font-size:17px;line-height:25px;color:#444;text-align:center">好<br>文</div>

<div class="abs" style="left:1103px;top:129px;width:99px;height:521px;background:rgba(60,52,54,.93)"></div>
<div class="abs" style="left:1103px;top:129px;width:99px;height:34px;background:rgba(90,82,85,.6)"></div>
<div class="abs" style="left:1103px;top:129px;width:99px;height:34px;line-height:34px;text-align:center;font-size:15px;color:#fff">配色方案</div>
<div class="abs" style="left:1108px;top:173px;width:89px;height:23px;background:#e6f2d3;border-radius:4px"></div>
<svg class="abs" style="left:1113px;top:178px" width="13" height="13" viewBox="0 0 13 13"><circle cx="6.5" cy="6.5" r="6.5" fill="#fff"/><path d="M6.5 3 V10 M3 6.5 H10" stroke="#e6f2d3" stroke-width="2"/></svg>
<div class="abs" style="left:1133px;top:173px;width:64px;height:23px;line-height:23px;font-size:12.5px;color:#333;white-space:nowrap;overflow:hidden">rgb(229, 2</div>
<div class="abs" style="left:1120px;top:204px;width:12px;height:12px;background:#eee;border:1px solid #bbb;border-radius:2px"></div>
<div class="abs" style="left:1136px;top:203px;line-height:18px;font-size:12px;color:#fff;white-space:nowrap">全文换色</div>
<div class="sw" style="left:1110px;top:225px;background:#acacac"></div><div class="sw" style="left:1132px;top:225px;background:#7c7c7c"></div><div class="sw" style="left:1154px;top:225px;background:#8c7d4a"></div><div class="sw" style="left:1176px;top:225px;background:#d9f99a"></div><div class="sw" style="left:1110px;top:249px;background:#9fd54f"></div><div class="sw" style="left:1132px;top:249px;background:#f6a99f"></div><div class="sw" style="left:1154px;top:249px;background:#b5e3a0"></div><div class="sw" style="left:1176px;top:249px;background:#ffd286"></div><div class="sw" style="left:1110px;top:273px;background:#b0384a"></div><div class="sw" style="left:1132px;top:273px;background:#fdfdfd"></div><div class="sw" style="left:1154px;top:273px;background:#d2de25"></div><div class="sw" style="left:1176px;top:273px;background:#f8c4a8"></div><div class="sw" style="left:1110px;top:297px;background:#c80a0a"></div><div class="sw" style="left:1132px;top:297px;background:#e8e8e8"></div><div class="sw" style="left:1154px;top:297px;background:#5ec889"></div><div class="sw" style="left:1176px;top:297px;background:#fdf2d3"></div><div class="sw" style="left:1110px;top:321px;background:#f8d0b4"></div><div class="sw" style="left:1132px;top:321px;background:#f2c94c"></div><div class="sw" style="left:1154px;top:321px;background:#f2a9e3"></div><div class="sw" style="left:1176px;top:321px;background:#d4d8e0"></div><div class="sw" style="left:1110px;top:345px;background:#a29fae"></div><div class="sw" style="left:1132px;top:345px;background:#b87820"></div><div class="sw" style="left:1154px;top:345px;background:#c060b8"></div><div class="sw" style="left:1176px;top:345px;background:#ecdf90"></div><div class="sw" style="left:1110px;top:369px;background:#3a78b0"></div><div class="sw" style="left:1132px;top:369px;background:#f6d840"></div><div class="sw" style="left:1154px;top:369px;background:#dcaa98"></div><div class="sw" style="left:1176px;top:369px;background:#eccfd6"></div><div class="sw" style="left:1110px;top:393px;background:#b0e3d2"></div><div class="sw" style="left:1132px;top:393px;background:#c0e070"></div>
<div class="abs" style="left:1108px;top:415px;width:89px;height:1px;background:#8a8486"></div>
<div class="sw" style="left:1110px;top:422px;background:#b01c18;outline:2px solid #4a7080;outline-offset:0px"></div><div class="sw" style="left:1132px;top:422px;background:#d82020"></div><div class="sw" style="left:1154px;top:422px;background:#f07060"></div><div class="sw" style="left:1176px;top:422px;background:#fde2d5"></div><div class="sw" style="left:1110px;top:446px;background:#d82a6a"></div><div class="sw" style="left:1132px;top:446px;background:#f0609a"></div><div class="sw" style="left:1154px;top:446px;background:#f4b6d4"></div><div class="sw" style="left:1176px;top:446px;background:#f7e8f2"></div><div class="sw" style="left:1110px;top:470px;background:#e05a1a"></div><div class="sw" style="left:1132px;top:470px;background:#f88020"></div><div class="sw" style="left:1154px;top:470px;background:#f8b020"></div><div class="sw" style="left:1176px;top:470px;background:#ffe6a0"></div><div class="sw" style="left:1110px;top:494px;background:#128c1e"></div><div class="sw" style="left:1132px;top:494px;background:#7db030"></div><div class="sw" style="left:1154px;top:494px;background:#b8c018"></div><div class="sw" style="left:1176px;top:494px;background:#e6f5d2"></div><div class="sw" style="left:1110px;top:518px;background:#3a4ab8"></div><div class="sw" style="left:1132px;top:518px;background:#2298e6"></div><div class="sw" style="left:1154px;top:518px;background:#52c0f4"></div><div class="sw" style="left:1176px;top:518px;background:#b2e4fc"></div><div class="sw" style="left:1110px;top:542px;background:#8844c0"></div><div class="sw" style="left:1132px;top:542px;background:#a050d0"></div><div class="sw" style="left:1154px;top:542px;background:#d0a4e6"></div><div class="sw" style="left:1176px;top:542px;background:#c07868"></div><div class="sw" style="left:1110px;top:566px;background:#222222"></div><div class="sw" style="left:1132px;top:566px;background:#777777"></div><div class="sw" style="left:1154px;top:566px;background:#c4c4c4"></div><div class="sw" style="left:1176px;top:566px;background:#f4f4f4"></div>
<div class="abs" style="left:1103px;top:589px;width:99px;height:20px;line-height:20px;text-align:center;font-size:12.5px;color:#fff;white-space:nowrap"><svg width="9" height="9" viewBox="0 0 9 9" style="vertical-align:-1px;margin-right:2px"><path d="M1 1 L4.5 4 L8 1 M1 4.5 L4.5 7.5 L8 4.5" fill="none" stroke="#fff" stroke-width="1.5"/></svg>更多配色</div>
<div class="abs" style="left:1103px;top:617px;width:99px;height:33px;background:#5b5357;line-height:33px;text-align:center;font-size:15px;color:#eee">特色功能</div>

</body></html>
